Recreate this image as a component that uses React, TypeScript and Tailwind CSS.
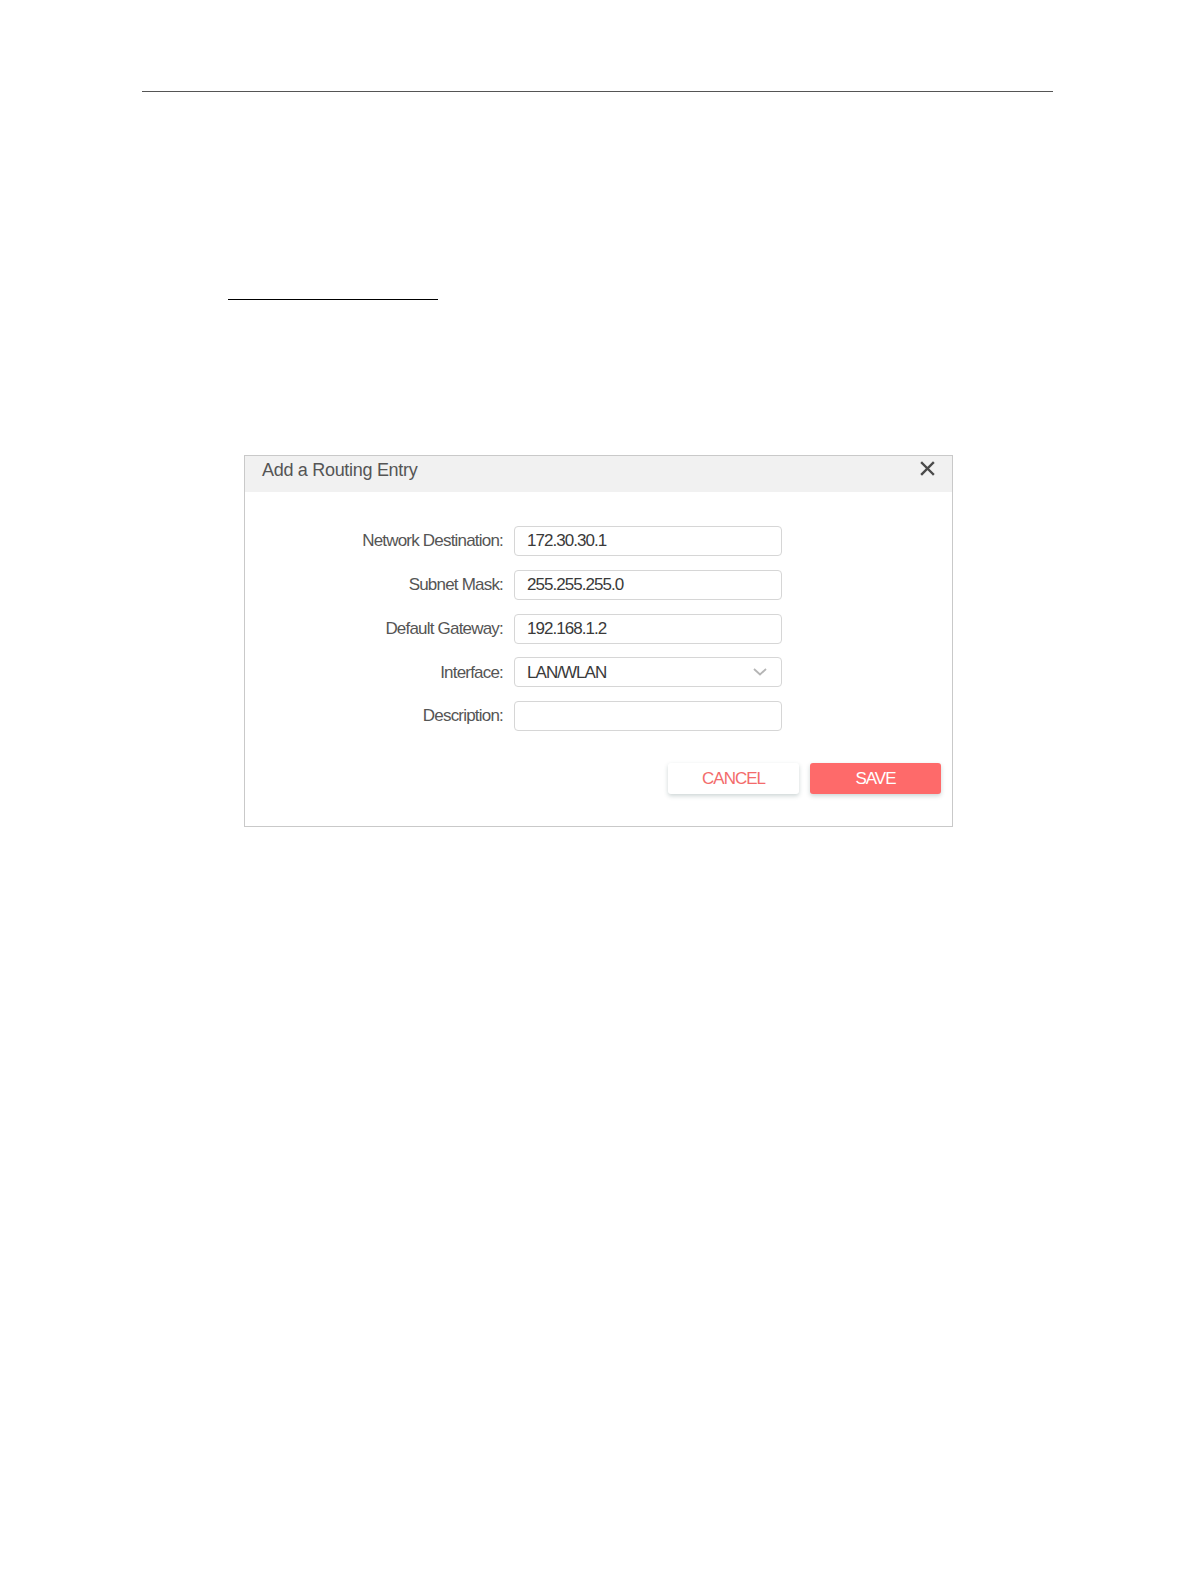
import React from 'react'

interface Field {
  label: string
  value: string
  select?: boolean
}

const fields: Field[] = [
  { label: 'Network Destination:', value: '172.30.30.1' },
  { label: 'Subnet Mask:', value: '255.255.255.0' },
  { label: 'Default Gateway:', value: '192.168.1.2' },
  { label: 'Interface:', value: 'LAN/WLAN', select: true },
  { label: 'Description:', value: '' },
]

export default function App() {
  return (
    <div className="min-h-[1582px] w-full bg-white pt-[91px] font-['Liberation_Sans',Arial,sans-serif]">
      {/* page header rule */}
      <div className="ml-[142px] h-px w-[911px] bg-[#555]" />

      {/* blank underline */}
      <div className="ml-[228px] mt-[207px] h-px w-[210px] bg-black" />

      {/* Dialog */}
      <div className="ml-[244px] mt-[155px] w-[709px] border border-[#c9c9c9] bg-white">
        <div className="flex h-[36px] items-center justify-between bg-[#f1f1f1] pb-[7px] pl-[17px] pr-[17px]">
          <span className="text-[18px] tracking-[-0.3px] text-[#555]">Add a Routing Entry</span>
          <svg width="15" height="15" viewBox="0 0 15 15" className="-mt-[4px]">
            <path d="M2 2L13 13M13 2L2 13" stroke="#4a4a4a" strokeWidth="2.4" strokeLinecap="square" />
          </svg>
        </div>

        <div className="flex flex-col gap-[13.75px] pt-[34px]">
          {fields.map((f) => (
            <div key={f.label} className="flex items-center">
              <label className="w-[258px] text-right text-[17px] tracking-[-0.8px] text-[#555]">
                {f.label}
              </label>
              <div className="ml-[11px] flex h-[30px] w-[268px] items-center justify-between rounded-[4px] border border-[#d6d6d6] pl-[12px] pr-[14px]">
                <span className="text-[17px] tracking-[-0.95px] text-[#3a3a3a]">{f.value}</span>
                {f.select && (
                  <svg width="14" height="8" viewBox="0 0 14 8">
                    <path d="M1 1L7 6.5L13 1" fill="none" stroke="#b5b5b5" strokeWidth="1.8" />
                  </svg>
                )}
              </div>
            </div>
          ))}
        </div>

        <div className="flex justify-end gap-[11px] pb-[32px] pr-[11px] pt-[32px]">
          <button className="h-[31px] w-[131px] rounded-[3px] bg-white text-[17px] tracking-[-1px] text-[#f36b6b] shadow-[0_2px_4px_rgba(60,90,90,0.25)]">
            CANCEL
          </button>
          <button className="h-[31px] w-[131px] rounded-[3px] bg-[#fe6a6a] text-[17px] tracking-[-1px] text-white shadow-[0_2px_4px_rgba(60,90,90,0.25)]">
            SAVE
          </button>
        </div>
      </div>
    </div>
  )
}
